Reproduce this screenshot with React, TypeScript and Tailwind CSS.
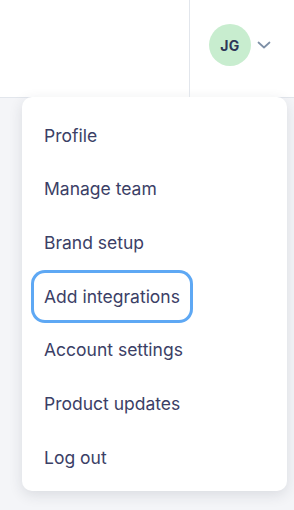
import React from "react";

const items = [
  "Profile",
  "Manage team",
  "Brand setup",
  "Add integrations",
  "Account settings",
  "Product updates",
  "Log out",
];

const FOCUSED = "Add integrations";

const App: React.FC = () => {
  return (
    <div
      className="h-[510px] w-[294px] overflow-hidden bg-[#f4f5f8]"
      style={{ fontFamily: "Inter, 'Noto Sans', sans-serif" }}
    >
      {/* top bar */}
      <header className="flex h-[98px] border-b border-[#e2e6ec] bg-white">
        <div className="w-[190px] border-r border-[#e2e6ec]" />
        <div className="flex items-start pl-[19px] pt-[24px]">
          <div className="flex h-[42px] w-[42px] items-center justify-center rounded-full bg-[#c8edcf] text-[14px] font-bold tracking-[0.5px] text-[#2f3658]">
            JG
          </div>
          <svg
            className="ml-[6px] mt-[17px]"
            width="14"
            height="8"
            viewBox="0 0 14 8"
            fill="none"
          >
            <path
              d="M1.5 1.5L7 6.5L12.5 1.5"
              stroke="#7d8fa6"
              strokeWidth="1.7"
              strokeLinecap="round"
              strokeLinejoin="round"
            />
          </svg>
        </div>
      </header>

      {/* dropdown menu */}
      <div className="ml-[22px] -mt-[1px] w-[265px] rounded-[10px] bg-white px-[9px] pt-[12px] pb-[6px] shadow-[0_4px_14px_rgba(30,40,60,0.12)]">
        {items.map((label) => (
          <div key={label} className="flex h-[53.7px] items-center">
            <span
              className={
                label === FOCUSED
                  ? "flex h-[53px] items-center rounded-[14px] px-[13px] text-[17.5px] text-[#3b4066] ring-[3px] ring-inset ring-[#5ea8f4]"
                  : "flex h-[53px] items-center rounded-[14px] px-[13px] text-[17.5px] text-[#3b4066]"
              }
            >
              {label}
            </span>
          </div>
        ))}
      </div>
    </div>
  );
};

export default App;
